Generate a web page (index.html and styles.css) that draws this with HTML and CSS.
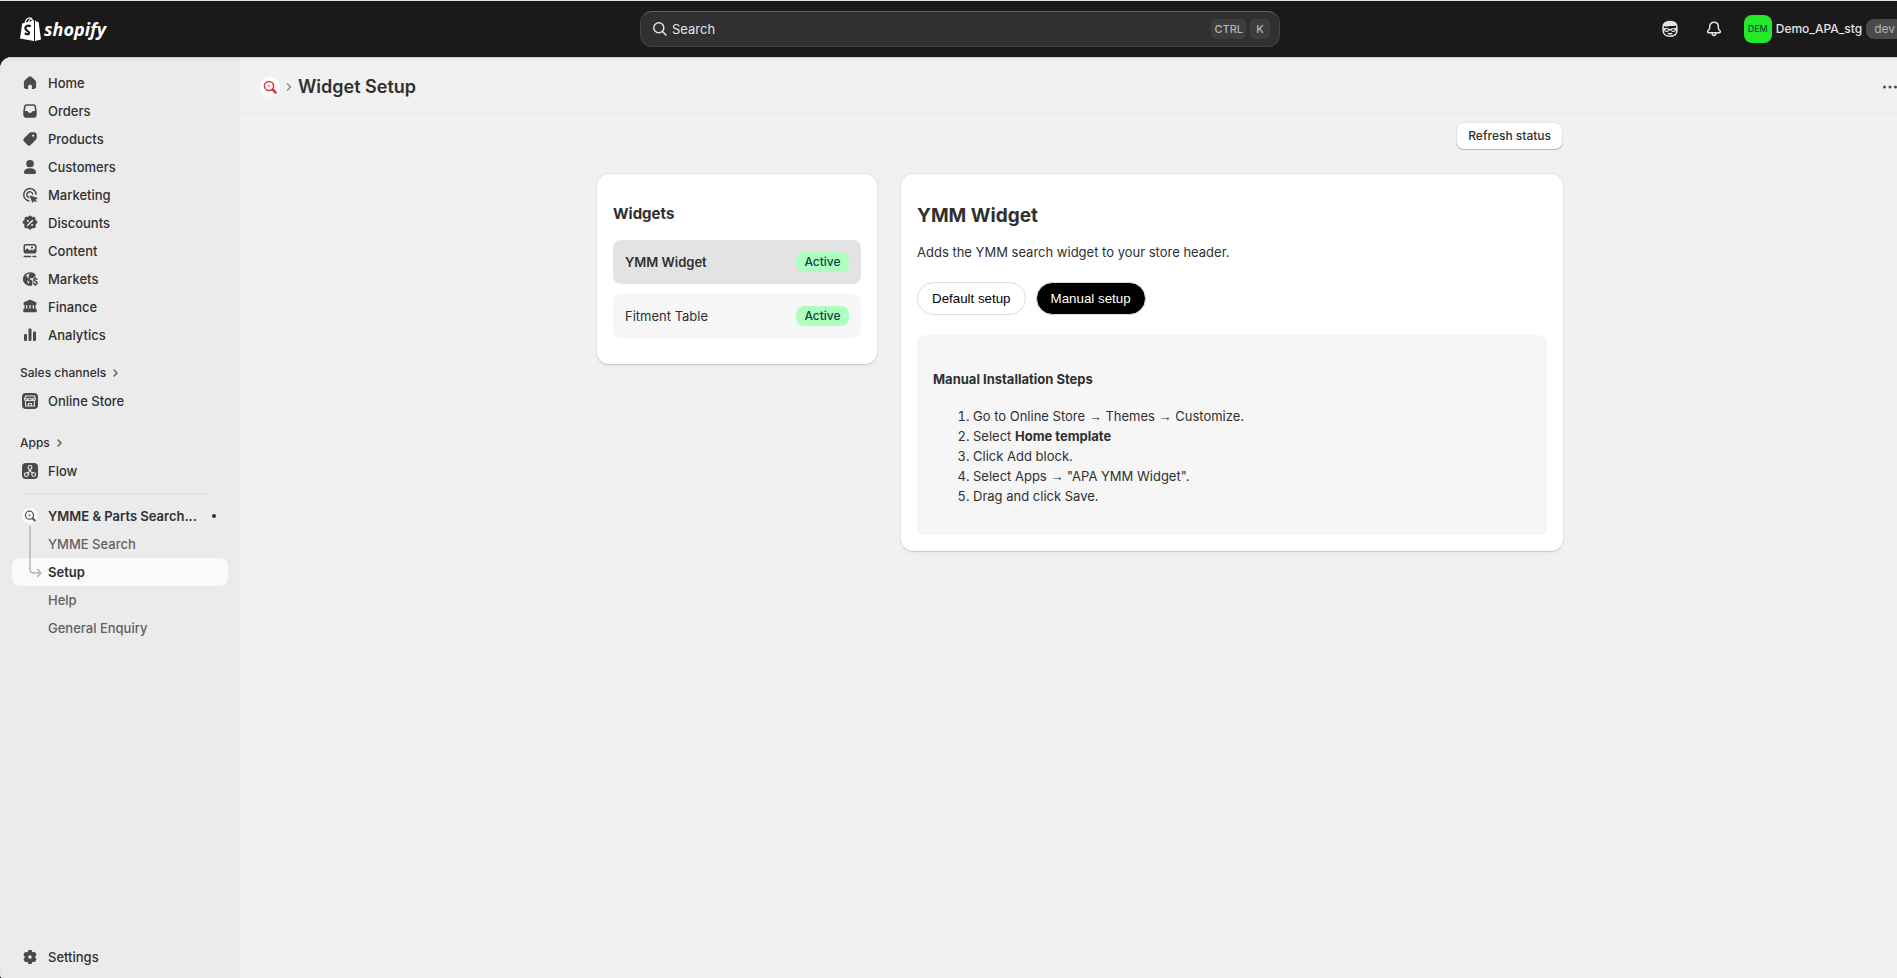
FILE: index.html
```html
<!DOCTYPE html>
<html lang="en">
<head>
<meta charset="utf-8">
<meta name="viewport" content="width=device-width, initial-scale=1">
<title>Widget Setup</title>
<link rel="stylesheet" href="styles.css">
</head>
<body>
<div class="app">
  <header class="topbar">
    <a class="logo" href="#">
      <svg class="logo-bag" viewBox="0 0 21 24" aria-hidden="true">
        <path d="M5 6.600C5.600 3.400 7.600.9 9.800.9c1.500 0 2.600 1.500 2.900 4" fill="none" stroke="#fff" stroke-width="1.100"/>
        <path d="M8.400 5.900C8.900 3.300 10.200 1.500 12 1.700" fill="none" stroke="#fff" stroke-width="1.100"/>
        <path d="M2.200 6.600 14 3.200V24L0 21.400z" fill="#fff"/>
        <path d="M15 3.200l1.700 1.600 1.900.2L21 22.500 15 24z" fill="#fff"/>
        <path d="M10.800 9.300c-3-1.500-5.500-.2-5.500 2 0 2.600 3.800 2.500 3.800 4.700 0 1.700-2.300 1.800-4.300.2" fill="none" stroke="#1a1a1a" stroke-width="2.200"/>
      </svg>
      <span class="logo-name">shopify</span>
    </a>
    <label class="search">
      <svg class="icon-search" viewBox="0 0 20 20" aria-hidden="true"><circle cx="8.800" cy="8.800" r="5"/><path d="M12.500 12.500l3.500 3.500"/></svg>
      <input class="search-input" type="text" placeholder="Search" aria-label="Search">
      <kbd class="key">CTRL</kbd><kbd class="key">K</kbd>
    </label>
    <div class="account">
      <button class="top-button" type="button" aria-label="Assistant">
        <svg viewBox="0 0 20 20" aria-hidden="true">
          <path d="M3.100 10V7.800c0-3.200 2.600-5.300 6.900-5.300s6.900 2.100 6.900 5.300v4c0 3.300-2.700 5.400-6.900 5.400s-6.900-2.100-6.900-5.400z" fill="none" stroke="#e3e3e3" stroke-width="1.500"/>
          <path d="M3.200 6.800C3.800 3.700 6.300 2.300 10 2.300s6.200 1.400 6.800 4.300l-2.900.3c-1.500.2-2.700-.2-3.900.1l-3 .5c-1.400.2-2.700.1-3.800-.7z" fill="#e3e3e3"/>
          <path d="M3 9.400c2.200-.5 5-.4 7 .5 2-.9 4.800-1 7-.5V11l-1 .3c-.4 2.100-4.200 2.300-4.800.1H8.800c-.6 2.200-4.400 2-4.800-.1L3 11z" fill="#e3e3e3"/>
          <path d="M5.900 11h1.500M12.600 11h1.500" stroke="#1a1a1a" stroke-width="1.400" stroke-linecap="round"/>
          <path d="M8.300 14.500q1.700.6 3.400 0" fill="none" stroke="#e3e3e3" stroke-width="1.400" stroke-linecap="round"/>
        </svg>
      </button>
      <button class="top-button" type="button" aria-label="Notifications">
        <svg viewBox="0 0 20 20" aria-hidden="true">
          <path d="M10 3.300c-2.600 0-4.300 1.900-4.300 4.300v1.200c0 .8-.3 1.400-.9 2.100l-.9 1.100c-.6.8-.2 1.800.8 1.800h10.600c1 0 1.400-1 .8-1.800l-.9-1.100c-.6-.7-.9-1.300-.9-2.100V7.600c0-2.400-1.700-4.300-4.300-4.300zM8.100 14c0 1.500.8 2.400 1.900 2.400s1.900-.9 1.900-2.400" fill="none" stroke="#e3e3e3" stroke-width="1.500" stroke-linejoin="round"/>
        </svg>
      </button>
      <button class="store" type="button">
        <span class="avatar">DEM</span><span class="store-name">Demo_APA_stg</span><span class="env">dev</span>
      </button>
    </div>
  </header>

  <div class="frame">
    <nav class="sidebar" aria-label="Main">
      <ul class="nav">
        <li><a class="nav-item" href="#"><svg class="nav-icon" viewBox="0 0 20 20"><path d="M8.700 3.800a1.900 1.900 0 0 1 2.600 0l3.900 3.500c.5.500.9 1.200.9 1.900v4.600c0 1.300-1 2.200-2.200 2.200h-1.500a.5.500 0 0 1-.5-.5v-2.200c0-1-.8-1.500-1.900-1.500s-1.900.5-1.900 1.500v2.200a.5.500 0 0 1-.5.500H6.100C4.900 16 3.900 15.100 3.900 13.800V9.200c0-.7.4-1.400.9-1.900z"/></svg>Home</a></li>
        <li><a class="nav-item" href="#"><svg class="nav-icon" viewBox="0 0 20 20"><path fill-rule="evenodd" d="M6.500 3.300h7c1.300 0 2.200.8 2.400 2l.8 4.500v4.300c0 1.500-1 2.600-2.500 2.600H5.800c-1.500 0-2.500-1.100-2.500-2.600V9.800l.8-4.500c.2-1.200 1.100-2 2.400-2zM6.600 4.800c-.6 0-.9.300-1 .9L4.900 10h1.800c.7 0 1.200.3 1.500.9.300.7.900 1.100 1.800 1.100s1.500-.4 1.800-1.100c.3-.6.8-.9 1.500-.9h1.800l-.7-4.300c-.1-.6-.4-.9-1-.9z"/></svg>Orders</a></li>
        <li><a class="nav-item" href="#"><svg class="nav-icon" viewBox="0 0 20 20"><path fill-rule="evenodd" d="M11.100 3.300h3.200c1.300 0 2.400 1.100 2.400 2.400v3.200c0 .7-.3 1.300-.7 1.700l-5.300 5.300c-1 1-2.400 1-3.300 0l-3.300-3.300c-1-1-1-2.400 0-3.300l5.300-5.300c.5-.5 1-.7 1.700-.7zM13.200 5.600a1.100 1.100 0 1 0 0 2.200 1.100 1.100 0 0 0 0-2.200z"/></svg>Products</a></li>
        <li><a class="nav-item" href="#"><svg class="nav-icon" viewBox="0 0 20 20"><rect x="6.200" y="3" width="7.600" height="7.200" rx="3.500"/><path d="M4 15.300c0-2.600 2.700-4 6-4s6 1.400 6 4c0 .9-.6 1.700-1.600 1.700H5.600c-1 0-1.600-.8-1.600-1.700z"/></svg>Customers</a></li>
        <li><a class="nav-item" href="#"><svg class="nav-icon" viewBox="0 0 20 20"><path class="stroke" d="M16.100 9.200a6.200 6.200 0 1 0-7.100 6.700M12.700 9a3 3 0 1 0-4 3.500"/><path d="M10.200 10.400l6.900 2.300c.6.200.6 1 0 1.200l-1.800.7 1.500 1.600-1.100 1.100-1.600-1.600-.8 1.600c-.2.500-1 .5-1.200 0l-2.300-6.100c-.2-.5 0-.9.400-.8z"/></svg>Marketing</a></li>
        <li><a class="nav-item" href="#"><svg class="nav-icon" viewBox="0 0 20 20"><path d="M8.700 3.100c.7-.9 1.900-.9 2.600 0l.7.900 1.500-.2c1.200-.2 2 .7 2 1.900v1.200l1.200.9c1 .8 1 2 0 2.700l-1.100 1 .1 1.700c.1 1.200-.8 2.100-2 2h-1.600l-.8.900c-.7.900-1.900.9-2.600 0l-.8-.9H6.300c-1.200.1-2.100-.8-2-2l.1-1.700-1.100-1c-1-.7-1-1.900 0-2.700l1.200-.9V5.700c0-1.200.8-2.100 2-1.900l1.500.2z"/><path class="paper-stroke" d="M7.500 12.500l5-5"/><circle class="paper" cx="7.900" cy="8" r="1"/><circle class="paper" cx="12.100" cy="12" r="1"/></svg>Discounts</a></li>
        <li><a class="nav-item" href="#"><svg class="nav-icon" viewBox="0 0 20 20"><path fill-rule="evenodd" d="M5.800 3h8.400c1.400 0 2.300.9 2.300 2.300v5c0 1.400-.9 2.300-2.300 2.300H5.800c-1.400 0-2.300-.9-2.300-2.300v-5C3.500 3.900 4.400 3 5.800 3zM5 9.200l1.300-1.300c.5-.5 1.200-.5 1.700 0l1.200 1.200c.4.400 1 .4 1.400 0 .5-.5 1.200-.5 1.700 0l.4.400 1-.9c.4-.4.9-.4 1.300 0V5.400c0-.6-.3-.9-.9-.9H5.900c-.6 0-.9.300-.9.900zM12 5.500a1.100 1.100 0 1 1 0 2.200 1.100 1.100 0 0 1 0-2.200z"/><path class="stroke" d="M4.300 15.600h6.200M13 15.600h2.700"/></svg>Content</a></li>
        <li><a class="nav-item" href="#"><svg class="nav-icon" viewBox="0 0 20 20"><path fill-rule="evenodd" d="M10 3.200c2 0 3.700.8 5 2.100l-1.500 1.400-2 .6c-1 .4-1.500 1.200-1.400 2.300l.2 1.100 1.700.9c.6.300.8.900.6 1.600l-.7 2.300c.2.400.2.800.1 1.200-5 .9-9-2.400-9-6.700 0-3.800 3.100-6.800 7-6.800zM9.800 4.600c-2 .1-3.700 1.300-4.500 2.900l1.800 1.600c.6.600.7 1.300.4 2l-.5 1.200 1.400 2.300.6.200.2-1.700-1.300-1.500c-.5-.6-.5-1.300 0-1.900l.8-1-.2-1.500z"/><path d="M9.500 4.500l4-.8 2.300 2.400-1.500 2.500-3.300 1-1.500-2z"/><path d="M3.500 8l3-1.500 1.500 3-1 3.500 2 3-3-1.200L3.300 12z"/><path class="stroke" d="M16.900 10.200c-.6-.7-3.200-.9-3.300.8-.1 1.600 3.500 1 3.500 2.900 0 1.700-2.700 1.800-3.700.7M15.300 8.700v1M15.300 15.200v1.100"/></svg>Markets</a></li>
        <li><a class="nav-item" href="#"><svg class="nav-icon" viewBox="0 0 20 20"><path fill-rule="evenodd" d="M9 2.900c.6-.3 1.400-.3 2 0l4.600 2c.6.300.9.700.9 1.300v.9c0 .6-.4 1-1 1v3.400c.6.200 1.200.8 1.200 1.500v1.300c0 .6-.4 1-1 1H4.300c-.6 0-1-.4-1-1V13c0-.7.600-1.300 1.200-1.500V8.100c-.6 0-1-.4-1-1v-.9c0-.6.300-1 .9-1.300zM6 8.200v3.200h1.300V8.200zM9.300 8.200v3.200h1.400V8.200zM12.700 8.200v3.200H14V8.200z"/></svg>Finance</a></li>
        <li><a class="nav-item" href="#"><svg class="nav-icon" viewBox="0 0 20 20"><rect x="4" y="9" width="3" height="7" rx="1"/><rect x="8.500" y="3.500" width="3" height="12.500" rx="1"/><rect x="13" y="6.500" width="3" height="9.500" rx="1"/></svg>Analytics</a></li>
      </ul>

      <section class="nav-section">
        <a class="nav-heading" href="#">Sales channels<svg class="chevron" viewBox="0 0 8 10"><path d="M2 2l3 3-3 3"/></svg></a>
        <a class="nav-item" href="#"><svg class="nav-icon" viewBox="0 0 20 20"><rect x="2" y="2" width="16" height="16" rx="4"/><g class="paper-line"><path d="M5.500 5h9l.9 3.200c0 2-2.600 2-3 .3-.4 1.700-4.400 1.700-4.800 0-.4 1.700-3 1.700-3-.3zM5.600 10.500V15h8.800v-4.500M8.500 15v-2.500h3V15M5 7.700h10"/></g></svg>Online Store</a>
      </section>
      <section class="nav-section">
        <a class="nav-heading" href="#">Apps<svg class="chevron" viewBox="0 0 8 10"><path d="M2 2l3 3-3 3"/></svg></a>
        <a class="nav-item" href="#"><svg class="nav-icon" viewBox="0 0 20 20"><rect x="2" y="2" width="16" height="16" rx="4"/><g class="paper-line"><circle cx="10" cy="6.400" r="1.900"/><circle cx="6.300" cy="13.600" r="1.900"/><circle cx="13.700" cy="13.600" r="1.900"/><path d="M9.600 8.400c0 2-1.200 3.300-2.700 3.500M10.400 8.400c0 2 1.200 3.300 2.700 3.500M8.300 13.500l1-.9"/></g></svg>Flow</a>
      </section>

      <section class="app-nav">
        <a class="nav-item nav-app" href="#"><svg class="nav-icon" viewBox="0 0 20 20"><circle cx="10" cy="10" r="8" fill="#fafafa"/><g fill="none" stroke="#555"><circle cx="9.500" cy="9.200" r="4" stroke-width="1.300"/><path d="M12.500 12.200l2.300 2.300" stroke-width="2" stroke-linecap="round"/><path d="M8.200 9.200h2.600M9.500 7.900v2.600" stroke-width=".9" opacity=".7"/></g></svg>YMME &amp; Parts Search...<span class="dot"></span></a>
        <ul class="nav subnav">
          <li><a class="nav-item" href="#">YMME Search</a></li>
          <li><a class="nav-item current" href="#" aria-current="page">Setup</a></li>
          <li><a class="nav-item" href="#">Help</a></li>
          <li><a class="nav-item" href="#">General Enquiry</a></li>
        </ul>
        <svg class="branch" viewBox="0 0 14 54" aria-hidden="true"><path d="M2 0v43q0 4 4 4h6M9.500 43.500l3.500 3.500-3.500 3.500"/></svg>
      </section>

      <a class="nav-item settings" href="#"><svg class="nav-icon" viewBox="0 0 20 20"><path fill-rule="evenodd" d="M9.300 2.900h1.400c.7 0 1.300.5 1.400 1.200l.2.900.6.300.9-.3c.7-.2 1.400.1 1.700.7l.7 1.200c.4.600.2 1.300-.3 1.800l-.6.600v1.400l.6.600c.5.500.7 1.200.3 1.800l-.7 1.200c-.3.600-1 .9-1.700.7l-.9-.3-.6.300-.2.900c-.1.700-.7 1.200-1.400 1.200H9.300c-.7 0-1.300-.5-1.400-1.200l-.2-.9-.6-.3-.9.300c-.7.200-1.400-.1-1.700-.7l-.7-1.200c-.4-.6-.2-1.300.3-1.800l.6-.6V9.300l-.6-.6c-.5-.5-.7-1.200-.3-1.800l.7-1.200c.3-.6 1-.9 1.700-.7l.9.300.6-.3.200-.9c.1-.7.700-1.200 1.400-1.200zM10 8.300a1.700 1.700 0 1 0 0 3.400 1.700 1.700 0 0 0 0-3.400z"/></svg>Settings</a>
    </nav>

    <main class="main">
      <div class="titlebar">
        <a class="app-mark" href="#" aria-label="YMME &amp; Parts Search"><svg viewBox="0 0 20 20"><g fill="none" stroke="#d9363b"><circle cx="9" cy="9" r="4.600" stroke-width="1.500"/><path d="M12.600 12.500l3 3" stroke-width="2.500" stroke-linecap="round"/><path d="M7.500 9h3M9 7.500v3" stroke="#ee8d8d"/></g></svg></a>
        <svg class="chevron crumb" viewBox="0 0 8 10"><path d="M2.500 2L5.500 5 2.500 8"/></svg>
        <h1 class="page-title">Widget Setup</h1>
        <button class="more" type="button" aria-label="More actions"><svg viewBox="0 0 20 20"><circle cx="4.500" cy="10" r="1.500"/><circle cx="10" cy="10" r="1.500"/><circle cx="15.500" cy="10" r="1.500"/></svg></button>
      </div>
      <div class="page">
        <div class="actions"><button class="refresh" type="button">Refresh status</button></div>
        <div class="columns">
          <section class="card">
            <h2 class="card-title">Widgets</h2>
            <button class="widget selected" type="button">YMM Widget<span class="badge">Active</span></button>
            <button class="widget" type="button">Fitment Table<span class="badge">Active</span></button>
          </section>
          <section class="card">
            <h2 class="detail-title">YMM Widget</h2>
            <p class="lead">Adds the YMM search widget to your store header.</p>
            <div class="modes">
              <button class="mode" type="button">Default setup</button>
              <button class="mode mode-on" type="button">Manual setup</button>
            </div>
            <div class="steps">
              <h3 class="steps-title">Manual Installation Steps</h3>
              <ol class="steps-list">
                <li>Go to Online Store <span class="arrow">→</span> Themes <span class="arrow">→</span> Customize.</li>
                <li>Select <strong>Home template</strong></li>
                <li>Click Add block.</li>
                <li>Select Apps <span class="arrow">→</span> "APA YMM Widget".</li>
                <li>Drag and click Save.</li>
              </ol>
            </div>
          </section>
        </div>
      </div>
    </main>
  </div>
</div>
</body>
</html>
```

FILE: styles.css
```css
* { box-sizing: border-box; }

body {
  margin: 0;
  overflow: hidden;
  background: #1a1a1a;
  color: #303030;
  font: 400 13px/20px Inter, "Liberation Sans", sans-serif;
}

button, input, kbd { font: inherit; color: inherit; }
button { border: 0; padding: 0; background: none; cursor: pointer; }
a { color: inherit; text-decoration: none; }
ul { list-style: none; margin: 0; padding: 0; }

/* The shell runs a little past the right edge of the window. */
.app {
  display: flex;
  flex-direction: column;
  height: 100vh;
  margin-right: -23px;
}

/* Top bar */
.topbar {
  display: grid;
  grid-template-columns: 1fr 640px 1fr;
  align-items: center;
  flex: none;
  height: 57px;
  border-top: 1px solid #dfe3e2;
  color: #e3e3e3;
}
.logo { display: flex; align-items: center; gap: 3px; padding-left: 20px; }
.logo-bag { width: 21px; height: 24px; }
.logo-name {
  color: #fff;
  font: italic 700 18px/24px "Open Sans", sans-serif;
}
.search {
  display: flex;
  align-items: center;
  height: 36px;
  padding: 0 9px;
  border: 1px solid #424242;
  border-top-color: #616161;
  border-radius: 12px;
  background: #303030;
}
.icon-search {
  width: 20px;
  height: 20px;
  margin-right: 2px;
  fill: none;
  stroke: #e3e3e3;
  stroke-width: 1.5;
  stroke-linecap: round;
}
.search-input {
  flex: 1;
  min-width: 0;
  padding: 0;
  border: 0;
  outline: 0;
  background: none;
}
.search-input::placeholder { color: #e3e3e3; opacity: 1; }
.key {
  margin-left: 4px;
  padding: 0 3px;
  min-width: 20px;
  border-radius: 5px;
  background: #3d3d3d;
  color: #b5b5b5;
  font-size: 11px;
  font-weight: 450;
  text-align: center;
}
.account { display: flex; justify-content: flex-end; align-items: center; }
.top-button { display: flex; padding: 6px; margin-right: 12px; }
.top-button svg { width: 20px; height: 20px; }
.store { display: flex; align-items: center; gap: 4px; padding-right: 17px; margin-left: 2px; }
.avatar {
  width: 28px;
  border-radius: 8px;
  background: #25e82b;
  color: #0c5132;
  font-size: 9px;
  font-weight: 450;
  line-height: 28px;
  text-align: center;
}
.store-name { font-size: 12px; font-weight: 550; }
.env {
  padding: 0 8px;
  border-radius: 8px;
  background: #4a4a4a;
  color: #b5b5b5;
  font-size: 12px;
}

/* Frame */
.frame {
  display: flex;
  flex: 1;
  min-height: 0;
  overflow: hidden;
  border-radius: 12px 0 0 2px / 12px 0 0 6px;
  background: #f1f1f1;
  box-shadow: inset 0 1px 0 #cfcfcf;
}
.sidebar {
  display: flex;
  flex-direction: column;
  flex: none;
  width: 240px;
  padding: 12px 12px 7px;
  background: #ebebeb;
  box-shadow: inset 0 1px 0 #cfcfcf, inset 0 3px 3px #e4e4e4;
}
.nav-item {
  display: flex;
  align-items: center;
  gap: 8px;
  height: 28px;
  padding: 0 8px;
  border-radius: 8px;
  font-weight: 550;
}
.nav-icon { flex: none; width: 20px; height: 20px; fill: #4a4a4a; }
.stroke { fill: none; stroke: #4a4a4a; stroke-width: 1.5; stroke-linecap: round; }
.paper { fill: #ebebeb; }
.paper-stroke { stroke: #ebebeb; stroke-width: 1.4; stroke-linecap: round; }
.paper-line { fill: none; stroke: #ebebeb; stroke-width: 1.1; stroke-linejoin: round; }
.nav-section { margin-top: 10px; }
.nav-section + .nav-section { margin-top: 14px; }
.nav-heading {
  display: flex;
  align-items: center;
  gap: 6px;
  height: 28px;
  padding: 0 8px;
  font-size: 12px;
  font-weight: 550;
}
.chevron {
  width: 8px;
  height: 10px;
  fill: none;
  stroke: #616161;
  stroke-width: 1.5;
  stroke-linecap: round;
  stroke-linejoin: round;
}
.app-nav {
  position: relative;
  margin-top: 8px;
  padding-top: 9px;
}
.app-nav::before {
  content: "";
  position: absolute;
  top: 0;
  left: 8px;
  right: 18px;
  height: 1px;
  background: #dfdfdf;
}
.nav-app { font-weight: 600; white-space: nowrap; }
.dot { width: 4px; height: 4px; margin-left: auto; margin-right: 4px; border-radius: 50%; background: #303030; }
.subnav .nav-item { padding-left: 36px; color: #616161; font-weight: 450; }
.subnav .current { background: #fafafa; color: #303030; font-weight: 600; }
.branch {
  position: absolute;
  top: 33px;
  left: 16px;
  width: 14px;
  height: 54px;
  fill: none;
  stroke: #b5b5b5;
  stroke-width: 1.5;
  stroke-linecap: round;
  stroke-linejoin: round;
}
.settings { margin-top: auto; }

/* Main column */
.main { flex: 1; min-width: 0; box-shadow: inset 0 1px 0 #cfcfcf, inset 0 3px 3px #e9e9e9; }
.titlebar {
  display: flex;
  align-items: center;
  height: 57px;
  padding: 4px 20px 0 20px;
  border-bottom: 1px solid #e7e7e7;
}
.app-mark { width: 20px; height: 20px; border-radius: 50%; background: #fff; }
.app-mark svg { display: block; }
.crumb { margin: 0 5px; stroke: #8a8a8a; }
.page-title { margin: 0; font-size: 18px; font-weight: 600; line-height: 24px; }
.more { display: flex; margin-left: auto; }
.more svg { width: 20px; height: 20px; fill: #4a4a4a; }
.page { max-width: 998px; margin: 0 auto; padding: 8px 16px; }
.actions { display: flex; justify-content: flex-end; margin-bottom: 24px; }
.refresh {
  height: 28px;
  padding: 0 12px;
  border-radius: 8px;
  background: #fff;
  box-shadow: inset 0 -1px 0 #b5b5b5, inset 0 0 0 1px #e3e3e3;
  font-size: 12px;
  font-weight: 550;
}
.columns { display: grid; grid-template-columns: 280px 1fr; gap: 24px; align-items: start; }
.card {
  padding: 16px;
  border-radius: 12px;
  background: #fff;
  box-shadow: 0 1px 0 #cccccc, 0 0 0 1px #e3e3e3, 0 3px 2px #e9e9e9;
}
.card-title { margin: 14px 0 16px; font-size: 15px; font-weight: 650; line-height: 20px; }
.widget {
  display: flex;
  justify-content: space-between;
  align-items: center;
  width: 100%;
  height: 44px;
  margin-bottom: 10px;
  padding: 0 12px;
  border-radius: 8px;
  background: #f6f6f6;
}
.selected { background: #e3e3e3; font-weight: 600; }
.badge {
  min-width: 53px;
  border-radius: 8px;
  background: #affebf;
  color: #014b40;
  font-size: 12px;
  font-weight: 550;
  text-align: center;
}
.detail-title { margin: 14px 0; font-size: 19px; font-weight: 700; line-height: 24px; }
.lead { margin: 0 0 20px; }
.modes { display: flex; gap: 10px; margin-bottom: 20px; }
.mode {
  font: revert;
  font-family: "Liberation Sans", Arial, sans-serif;
  padding: 8px 14px;
  border: 1px solid #dddddd;
  border-radius: 18px;
  background: #fff;
  color: #000;
}
.mode-on { background: #000; color: #fff; }
.steps { padding: 16px; border-radius: 8px; background: #f6f6f6; }
.steps-title { margin: 18px 0 17px; font-size: 13px; font-weight: 650; }
.steps-list { margin: 0 0 13px; padding-left: 40px; }
.steps-list strong { font-weight: 650; }
.arrow { font-family: "Liberation Sans", sans-serif; line-height: 1; }
```
